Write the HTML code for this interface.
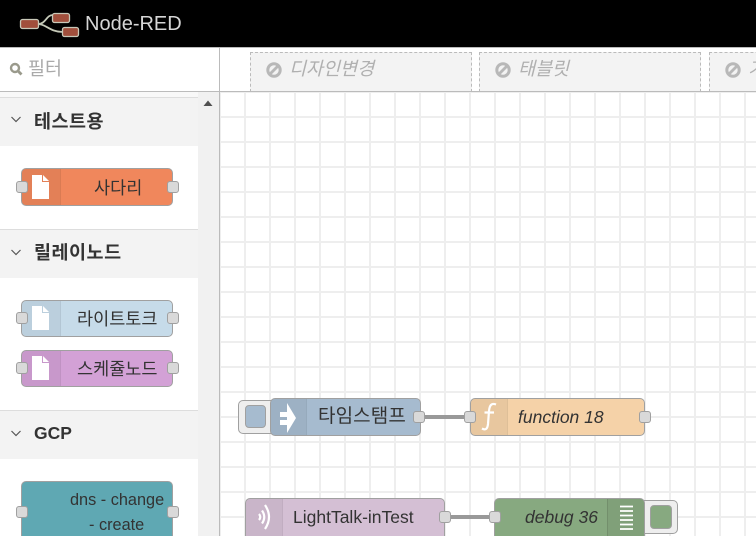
<!DOCTYPE html>
<html style="width:756px;height:536px;overflow:hidden"><head><meta charset="utf-8"><style>
html,body{margin:0;padding:0}
body{width:756px;height:536px;overflow:hidden;position:relative;background:#fff;font-family:"Liberation Sans","Noto Sans CJK KR",sans-serif;color:#333}
div,svg{position:absolute;box-sizing:border-box}
.n{border:1px solid #a0a0a0;border-radius:5px;overflow:hidden}
.ic{left:0;top:0;bottom:0;background:rgba(0,0,0,.05);border-right:1px solid rgba(0,0,0,.04)}
.p{width:12px;height:12px;background:#d9d9d9;border:1px solid #a0a0a0;border-radius:3px}
.t{font-size:16px;line-height:20px;white-space:nowrap;color:#333}
.k{font-size:17.5px}
.c{font-size:17.5px}
.cat{left:0;width:198px;height:49px;background:#f3f3f3;border-top:1px solid #ddd}
.cat b{position:absolute;left:34px;top:12px;font-size:18.5px;line-height:22px;color:#333;white-space:nowrap}
.tab{top:52px;height:40px;background:#f3f3f3;border:1px dashed #bbb;border-bottom:none}
.tab span{position:absolute;left:38px;top:5px;font-size:18.5px;line-height:22px;font-style:italic;color:#b0b0b0;white-space:nowrap}
</style></head><body>
<div style="left:0;top:0;width:756px;height:47px;background:#000"></div>
<div style="left:0;top:47px;width:756px;height:1px;background:#bbb"></div>
<svg style="left:18px;top:10px" width="64" height="28" viewBox="0 0 64 28">
<path d="M20 14C28 14 28 5 35 5M20 14C28 14 32 22 45 22" fill="none" stroke="#c5c9b8" stroke-width="1.800"/>
<rect x="2.500" y="9.500" width="18" height="9" rx="2" fill="#a14f3c" stroke="#c8c8b8" stroke-width="1.300"/>
<rect x="34.500" y="3.500" width="17" height="9" rx="2" fill="#a14f3c" stroke="#c8c8b8" stroke-width="1.300"/>
<rect x="44.500" y="17.500" width="16" height="9" rx="2" fill="#a14f3c" stroke="#c8c8b8" stroke-width="1.300"/>
</svg>
<div style="left:85px;top:12px;font-size:20px;line-height:24px;color:#d6d6d6;white-space:nowrap">Node-RED</div>

<!-- canvas -->
<div style="left:220px;top:92px;width:536px;height:444px;background-color:#fff;background-image:linear-gradient(#eee 0 2px,transparent 2px),linear-gradient(90deg,#eee 0 2px,transparent 2px);background-size:25px 25px;background-position:24px 24px"></div>

<!-- sidebar -->
<div style="left:0;top:48px;width:220px;height:488px;background:#fff"></div>
<div style="left:219px;top:48px;width:1px;height:488px;background:#bbb"></div>
<div style="left:0;top:91px;width:220px;height:1px;background:#bbb"></div>
<svg style="left:9px;top:62px" width="14" height="14" viewBox="0 0 14 14"><circle cx="6" cy="6" r="4" fill="none" stroke="#9a9a8c" stroke-width="2.400"/><path d="M8.500 8.500L12.500 12.500" stroke="#9a9a8c" stroke-width="2.800"/></svg>
<div style="left:28px;top:58px;font-size:18.5px;line-height:22px;color:#aaa;white-space:nowrap">필터</div>
<div style="left:198px;top:92px;width:21px;height:444px;background:#f1f1f1"></div>
<div style="left:0;top:92px;width:198px;height:5px;background:#f8f8f8"></div>
<svg style="left:203px;top:100px" width="11" height="7"><path d="M.5 6L5 .5 9.500 6z" fill="#505050"/></svg>

<div class="cat" style="top:97px"><b style="letter-spacing:.5px;top:13px">테스트용</b></div>
<div class="cat" style="top:229px"><b style="letter-spacing:.5px">릴레이노드</b></div>
<div class="cat" style="top:410px"><b style="font-size:17.5px;top:11px">GCP</b></div>
<svg style="left:10px;top:115px" width="12" height="9"><path d="M1.500 2L6 6.500 10.500 2" fill="none" stroke="#555" stroke-width="1.200"/></svg>
<svg style="left:10px;top:248px" width="12" height="9"><path d="M1.500 2L6 6.500 10.500 2" fill="none" stroke="#555" stroke-width="1.200"/></svg>
<svg style="left:10px;top:429px" width="12" height="9"><path d="M1.500 2L6 6.500 10.500 2" fill="none" stroke="#555" stroke-width="1.200"/></svg>

<!-- palette: sadari -->
<div class="n" style="left:21px;top:168px;width:152px;height:38px;background:#f0875c"><div class="ic" style="width:39px"></div></div>
<svg style="left:32px;top:175px" width="18" height="25"><path d="M0 0H10V7H17V24H0z" fill="#fff"/><path d="M11 0L17 6H11z" fill="#fff"/></svg>
<div class="p" style="left:16px;top:181px"></div><div class="p" style="left:167px;top:181px"></div>
<div class="t k" style="left:94px;top:178px">사다리</div>

<!-- palette: lighttalk -->
<div class="n" style="left:21px;top:300px;width:152px;height:37px;background:#c6dbe9"><div class="ic" style="width:39px"></div></div>
<svg style="left:32px;top:306px" width="18" height="25"><path d="M0 0H10V7H17V24H0z" fill="#fff"/><path d="M11 0L17 6H11z" fill="#fff"/></svg>
<div class="p" style="left:16px;top:312px"></div><div class="p" style="left:167px;top:312px"></div>
<div class="t k" style="left:77px;top:309px">라이트토크</div>

<!-- palette: schedule -->
<div class="n" style="left:21px;top:350px;width:152px;height:37px;background:#d3a1d6"><div class="ic" style="width:39px"></div></div>
<svg style="left:32px;top:356px" width="18" height="25"><path d="M0 0H10V7H17V24H0z" fill="#fff"/><path d="M11 0L17 6H11z" fill="#fff"/></svg>
<div class="p" style="left:16px;top:362px"></div><div class="p" style="left:167px;top:362px"></div>
<div class="t k" style="left:77px;top:359px">스케쥴노드</div>

<!-- palette: dns -->
<div class="n" style="left:21px;top:481px;width:152px;height:70px;background:#5fa8b3"></div>
<div class="p" style="left:16px;top:506px"></div><div class="p" style="left:167px;top:506px"></div>
<div class="t" style="left:70px;top:490px;font-size:16.3px">dns - change</div>
<div class="t" style="left:89px;top:515px;font-size:16.3px">- create</div>

<!-- tabs -->
<div class="tab" style="left:250px;width:222px"><span>디자인변경</span></div>
<div class="tab" style="left:479px;width:222px"><span>태블릿</span></div>
<div class="tab" style="left:709px;width:60px"><span>기</span></div>
<svg style="left:266px;top:62px" width="16" height="16"><circle cx="8" cy="8" r="6.200" fill="none" stroke="#b8b8b8" stroke-width="3"/><path d="M4 12L12 4" stroke="#b8b8b8" stroke-width="2.800"/></svg>
<svg style="left:495px;top:62px" width="16" height="16"><circle cx="8" cy="8" r="6.200" fill="none" stroke="#b8b8b8" stroke-width="3"/><path d="M4 12L12 4" stroke="#b8b8b8" stroke-width="2.800"/></svg>
<svg style="left:725px;top:62px" width="16" height="16"><circle cx="8" cy="8" r="6.200" fill="none" stroke="#b8b8b8" stroke-width="3"/><path d="M4 12L12 4" stroke="#b8b8b8" stroke-width="2.800"/></svg>
<div style="left:220px;top:91px;width:536px;height:1px;background:#bbb"></div>

<!-- wires -->
<div style="left:425px;top:415px;width:40px;height:4px;background:#999"></div>
<div style="left:451px;top:515px;width:38px;height:4px;background:#999"></div>

<!-- inject -->
<div style="left:238px;top:400px;width:40px;height:34px;background:#eee;border:1px solid #a0a0a0;border-radius:5px"></div>
<div style="left:245px;top:405px;width:21px;height:23px;background:#a6bbcf;border:1px solid #a0a0a0;border-radius:4px"></div>
<div class="n" style="left:270px;top:398px;width:151px;height:38px;background:#a6bbcf"><div class="ic" style="width:36px"></div></div>
<svg style="left:279px;top:402px" width="20" height="32"><path d="M1 10H8V15H1zM1 18H8V23H1z" fill="#fff"/><path d="M8 1L17 16 8 31z" fill="#fff"/></svg>
<div class="p" style="left:413px;top:411px"></div>
<div class="t" style="left:318px;top:407px;font-size:19px;letter-spacing:.1px">타임스탬프</div>

<!-- function -->
<div class="n" style="left:470px;top:398px;width:175px;height:38px;background:#f5d2a8"><div class="ic" style="width:37px"></div></div>
<svg style="left:480px;top:402px" width="20" height="30"><path d="M16 2.500C11 .5 9.500 4 9 9L8 22C7.500 27 5.500 28.500 2 26.500M4.500 10.500H14" fill="none" stroke="#fff" stroke-width="2.200"/></svg>
<div class="p" style="left:464px;top:411px"></div><div class="p" style="left:639px;top:411px"></div>
<div class="t c" style="left:518px;top:407px;font-style:italic">function 18</div>

<!-- lighttalk in -->
<div class="n" style="left:245px;top:498px;width:200px;height:48px;background:#d4bfd4"><div class="ic" style="width:37px"></div></div>
<svg style="left:255px;top:503px" width="18" height="28"><path d="M4 11Q6.500 14 4 17M7 7.500Q11.500 14 7 20.500M10 2Q18 14 10 26" fill="none" stroke="#fff" stroke-width="2.200"/></svg>
<div class="p" style="left:439px;top:511px"></div>
<div class="t c" style="left:293px;top:507px">LightTalk-inTest</div>

<!-- debug -->
<div style="left:636px;top:500px;width:42px;height:34px;background:#eee;border:1px solid #a0a0a0;border-radius:5px"></div>
<div style="left:650px;top:505px;width:22px;height:24px;background:#87a980;border:1px solid #a0a0a0;border-radius:4px"></div>
<div class="n" style="left:494px;top:498px;width:151px;height:48px;background:#87a980"><div style="right:0;top:0;bottom:0;width:37px;background:rgba(0,0,0,.05);border-left:1px solid rgba(0,0,0,.1)"></div></div>
<svg style="left:619px;top:505px" width="16" height="26"><path d="M1 1.500H14M1 6H14M1 10.500H14M1 15H14M1 19.500H14M1 24H14" stroke="#fff" stroke-width="1.800"/></svg>
<div class="p" style="left:489px;top:511px"></div>
<div class="t c" style="left:525px;top:507px;font-style:italic">debug 36</div>
</body></html>
